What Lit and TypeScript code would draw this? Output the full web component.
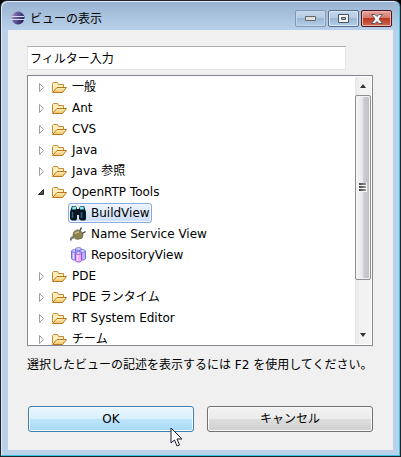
import { LitElement, html, css, svg } from "lit";
import { customElement, property, state } from "lit/decorators.js";
import { classMap } from "lit/directives/class-map.js";

type IconName = "folder" | "binoculars" | "plug" | "jars";

interface Node {
  label: string;
  icon: IconName;
  level: number;
  open?: boolean;
}

const NODES: Node[] = [
  { label: "一般", icon: "folder", level: 0 },
  { label: "Ant", icon: "folder", level: 0 },
  { label: "CVS", icon: "folder", level: 0 },
  { label: "Java", icon: "folder", level: 0 },
  { label: "Java 参照", icon: "folder", level: 0 },
  { label: "OpenRTP Tools", icon: "folder", level: 0, open: true },
  { label: "BuildView", icon: "binoculars", level: 1 },
  { label: "Name Service View", icon: "plug", level: 1 },
  { label: "RepositoryView", icon: "jars", level: 1 },
  { label: "PDE", icon: "folder", level: 0 },
  { label: "PDE ランタイム", icon: "folder", level: 0 },
  { label: "RT System Editor", icon: "folder", level: 0 },
  { label: "チーム", icon: "folder", level: 0 },
];

const jar = (x: number, y: number, fill: string, edge: string) => svg`
  <g transform="translate(${x} ${y})">
    <path d="M.5 2v7.500c0 2 6 2 6 0V2" fill=${fill} stroke=${edge}/>
    <path d="M2.500 4v6" stroke="#fff" stroke-opacity=".7"/>
    <ellipse cx="3.500" cy="2" rx="3" ry="1.300" fill="#dcecff" stroke=${edge}/>
  </g>`;

const ICONS = {
  folder: svg`
    <defs><linearGradient id="f" x2="0" y2="1"><stop stop-color="#fff0bd"/><stop offset="1" stop-color="#f5c264"/></linearGradient></defs>
    <path d="M1.500 12.500V4.500l1-1h4l1 2h5v2.500" fill="#fdeebb" stroke="#c58a35"/>
    <path d="M1.500 13.500L6 8.500h9.500l-4 5z" fill="url(#f)" stroke="#b5771f" stroke-linejoin="round"/>`,
  binoculars: svg`
    <path d="M2 1h4l1 3h2l1-3h4l2 6v7l-1 1.500h-4L9 14v-4H7v4l-1 1.500H2L0 14V7z" fill="#0a1522"/>
    <path d="M2.500 1.500h3.500v3H2zM10 1.500h3.500l.5 3h-4z" fill="#7feaf0"/>
    <path d="M2.500 7v6M11.500 7v6" stroke="#2d6488" stroke-width="1.500"/>`,
  plug: svg`
    <path d="M0 14.500q1-3 4-3.500" fill="none" stroke="#7c7c7a" stroke-width="2.500"/>
    <path d="M3 9q0-4 4-5 5 0 6 5 0 4-4 4-5 1-6-4z" fill="#8c8250" stroke="#77704c"/>
    <path d="M5 8q1-2 4-2" fill="none" stroke="#c8bd86" stroke-width="1.500"/>
    <path d="M10 4.500l1.500-3M12.500 7.500l3-2" stroke="#444" stroke-width="1.500"/>`,
  jars: svg`${jar(1, 2, "#a9b0ff", "#7868ea")}${jar(5, 0, "#a9c0ff", "#7868ea")}${jar(9, 2, "#b9b4ff", "#7868ea")}${jar(5, 4, "#f6a9f0", "#8f50dc")}`,
};

const icon = (name: IconName) =>
  html`<svg class="icon" viewBox="0 0 16 16" width="16" height="16" aria-hidden="true">${ICONS[name]}</svg>`;

@customElement("view-tree")
export class ViewTree extends LitElement {
  @state() private selected = "BuildView";

  static styles = css`
    :host {
      display: flex;
      min-height: 0;
      box-sizing: border-box;
      border: 1px solid #828790;
      background: #fff;
      overflow: hidden;
    }
    .rows {
      flex: 1;
      min-width: 0;
      overflow: hidden;
      padding-left: 8px;
    }
    .row {
      display: flex;
      align-items: flex-end;
      height: 21px;
    }
    .child {
      padding-left: 32px;
    }
    .twisty {
      width: 14px;
      height: 20px;
      flex: none;
    }
    .item {
      display: flex;
      align-items: center;
      gap: 5px;
      box-sizing: border-box;
      height: 20px;
      padding: 0 1px 0 0;
      border: 1px solid transparent;
      border-radius: 3px;
      white-space: nowrap;
      line-height: 18px;
    }
    .child .item {
      padding-left: 1px;
    }
    .picked {
      border-color: #84acdd;
      background: linear-gradient(#eef4fd, #c9ddf8);
      box-shadow: inset 0 0 0 1px #f4f8fe;
    }
    .icon {
      flex: none;
    }
    .bar {
      display: flex;
      flex-direction: column;
      width: 16px;
      margin: 1px 1px 1px 0;
      background: linear-gradient(90deg, #e6e6e6, #f2f2f2 30%, #f2f2f2);
    }
    .arrow {
      height: 18px;
      padding: 0;
      border: 0;
      background: none;
      display: grid;
      place-items: center;
    }
    .track {
      flex: 1;
    }
    .thumb {
      height: 80%;
      box-sizing: border-box;
      border: 1px solid #8e8e8e;
      border-radius: 2px;
      background: linear-gradient(90deg, #f6f6f6, #e8e8ea 45%, #cdcdd1 55%, #bfbfc4);
      box-shadow: inset 0 0 0 1px #f4f4f4;
      display: grid;
      place-items: center;
    }
  `;

  render() {
    return html`
      <div class="rows" role="tree" aria-label="ビュー">
        ${NODES.map((n) => this.row(n))}
      </div>
      <div class="bar">
        <button class="arrow" aria-label="上へ">
          <svg width="8" height="4" viewBox="0 0 8 4"><path d="M1 4l3-4 3 4z" fill="#333" /></svg>
        </button>
        <div class="track">
          <div class="thumb">
            <svg width="8" height="9" viewBox="0 0 8 9">
              <defs>
                <linearGradient id="g"><stop stop-color="#444" /><stop offset="1" stop-color="#999" /></linearGradient>
              </defs>
              <path d="M0 0h8v9H0z" fill="#f4f4f4" />
              <path d="M0 0h7v2H0zM0 3h7v2H0zM0 6h7v2H0z" fill="url(#g)" />
            </svg>
          </div>
        </div>
        <button class="arrow" aria-label="下へ">
          <svg width="8" height="4" viewBox="0 0 8 4"><path d="M1 0l3 4 3-4z" fill="#333" /></svg>
        </button>
      </div>
    `;
  }

  private row(n: Node) {
    return html`
      <div class=${classMap({ row: true, child: n.level > 0 })} role="treeitem"
        aria-level=${n.level + 1} aria-selected=${n.label === this.selected}
        @click=${() => (this.selected = n.label)}>
        ${n.level === 0
          ? html`<svg class="twisty" viewBox="0 0 14 20" aria-hidden="true">
              ${n.open
                ? svg`<path d="M7.500 7.500v5h-5z" fill="#555" stroke="#262626"/>`
                : svg`<path d="M3.500 6.500v8l4-4z" fill="#fff" stroke="#a0a0a0"/>`}
            </svg>`
          : null}
        <span class=${classMap({ item: true, picked: n.label === this.selected })}>
          ${icon(n.icon)}<span>${n.label}</span>
        </span>
      </div>
    `;
  }
}

@customElement("app-root")
export class AppRoot extends LitElement {
  @property() heading = "ビューの表示";

  static styles = css`
    :host {
      display: block;
      height: 100vh;
      background: #000;
      color: #000;
      font: 12px/20px "DejaVu Sans", "Noto Sans CJK JP", sans-serif;
    }
    .window {
      position: relative;
      display: flex;
      flex-direction: column;
      box-sizing: border-box;
      height: 100%;
      padding: 0 6px 6px;
      border: 1px solid #20242c;
      border-radius: 7px 7px 0 0;
      background: linear-gradient(#98b3d1, #b9d1ea 30px);
      box-shadow: inset -1px -1px 0 #38c3de, inset 1px 1px 0 #dce9f6;
    }
    .title {
      display: flex;
      align-items: center;
      height: 29px;
      flex: none;
      padding: 0 2px 0 4px;
    }
    .name {
      flex: 1;
      margin: 7px 0 0 5px;
      font: inherit;
    }
    .logo {
      margin-top: 5px;
    }
    .controls {
      display: flex;
      gap: 2px;
      margin-top: 6px;
    }
    .control {
      width: 31px;
      height: 17px;
      box-sizing: border-box;
      padding: 0;
      border: 1px solid #5b6f8c;
      border-radius: 2px;
      background: linear-gradient(#c3d6ea, #b5cbe3 48%, #9bb6d3 50%, #b5d0ea);
      box-shadow: inset 0 0 0 1px #d9e7f5;
      display: grid;
      place-items: center;
    }
    .dim {
      border-color: #8299b5;
      box-shadow: inset 0 0 0 1px #c3d7eb;
    }
    .close {
      border-color: #4a1420;
      background: linear-gradient(#e5a79b, #d4786a 48%, #b93722 50%, #d2674f);
      box-shadow: inset 0 0 0 1px #eab5aa;
    }
    .body {
      flex: 1;
      min-height: 0;
      display: flex;
      flex-direction: column;
      margin: 0 1px;
      padding: 16px 20px 18px 19px;
      background: #f0f0f0;
    }
    .filter {
      box-sizing: border-box;
      height: 24px;
      margin: 0 27px 5px 0;
      padding: 0 2px 2px;
      border: 1px solid #e2e3ea;
      border-top-color: #abadb3;
      background: #fff;
      color: inherit;
      font: inherit;
      outline: 0;
    }
    .views {
      flex: 1;
    }
    .hint {
      margin: 9px 0 31px;
      white-space: nowrap;
    }
    .actions {
      display: grid;
      grid-template-columns: 1fr 1fr;
      gap: 13px;
      padding-left: 1px;
    }
    .action {
      height: 26px;
      padding: 0;
      border: 1px solid #707070;
      border-radius: 3px;
      background: linear-gradient(#f2f2f2, #ebebeb 48%, #dddddd 50%, #cfcfcf);
      box-shadow: inset 0 0 0 1px #fafafa;
      color: inherit;
      font: inherit;
    }
    .hot {
      border-color: #3c7fb1;
      background: linear-gradient(#eaf6fd, #d9f0fc 48%, #bee6fd 50%, #a7d9f5);
    }
    .pointer {
      position: absolute;
      left: 169px;
      top: 426px;
    }
  `;

  render() {
    return html`
      <section class="window" role="dialog" aria-label=${this.heading}>
        <header class="title">
          <svg class="logo" width="14" height="14" viewBox="0 0 14 14" aria-hidden="true">
            <defs>
              <linearGradient id="e" x2="1" y2=".4">
                <stop stop-color="#f0b4c4" /><stop offset=".35" stop-color="#7468ac" /><stop offset="1" stop-color="#2a2560" />
              </linearGradient>
            </defs>
            <circle cx="7" cy="7" r="6.500" fill="url(#e)" />
            <path d="M1 5.500h12M0 8.500h14" stroke="#d4dcf4" />
          </svg>
          <h1 class="name">${this.heading}</h1>
          <div class="controls">
            <button class="control dim" aria-label="最小化">
              <svg width="11" height="5" viewBox="0 0 11 5"><path d="M.5.5h10v4H.5z" fill="#e0e0e0" stroke="#666" /></svg>
            </button>
            <button class="control" aria-label="最大化">
              <svg width="11" height="9" viewBox="0 0 11 9">
                <path d="M.5.5h10v8H.5z" fill="#f6f6f6" stroke="#4a5062" /><path d="M3.500 3.500h4v2h-4z" fill="#a9bfd8" stroke="#4a5062" />
              </svg>
            </button>
            <button class="control close" aria-label="閉じる">
              <svg width="12" height="10" viewBox="0 0 12 10">
                <path d="M.5.5h3.500L6 2.500l2-2h3.500L8 5l3.500 4.500H8l-2-2-2 2H.5L4 5z" fill="#f8f8f8" stroke="#5a5566" />
              </svg>
            </button>
          </div>
        </header>
        <main class="body">
          <input class="filter" aria-label="フィルター" value="フィルター入力" />
          <view-tree class="views"></view-tree>
          <p class="hint">選択したビューの記述を表示するには F2 を使用してください。</p>
          <div class="actions">
            <button class="action hot">OK</button>
            <button class="action">キャンセル</button>
          </div>
        </main>
        <svg class="pointer" width="13" height="20" viewBox="0 0 13 20" aria-hidden="true">
          <path d="M1 1v15l3.500-3 2.500 6 2.500-1-2.500-6h5z" fill="#fff" stroke="#1c1c30" />
        </svg>
      </section>
    `;
  }
}
